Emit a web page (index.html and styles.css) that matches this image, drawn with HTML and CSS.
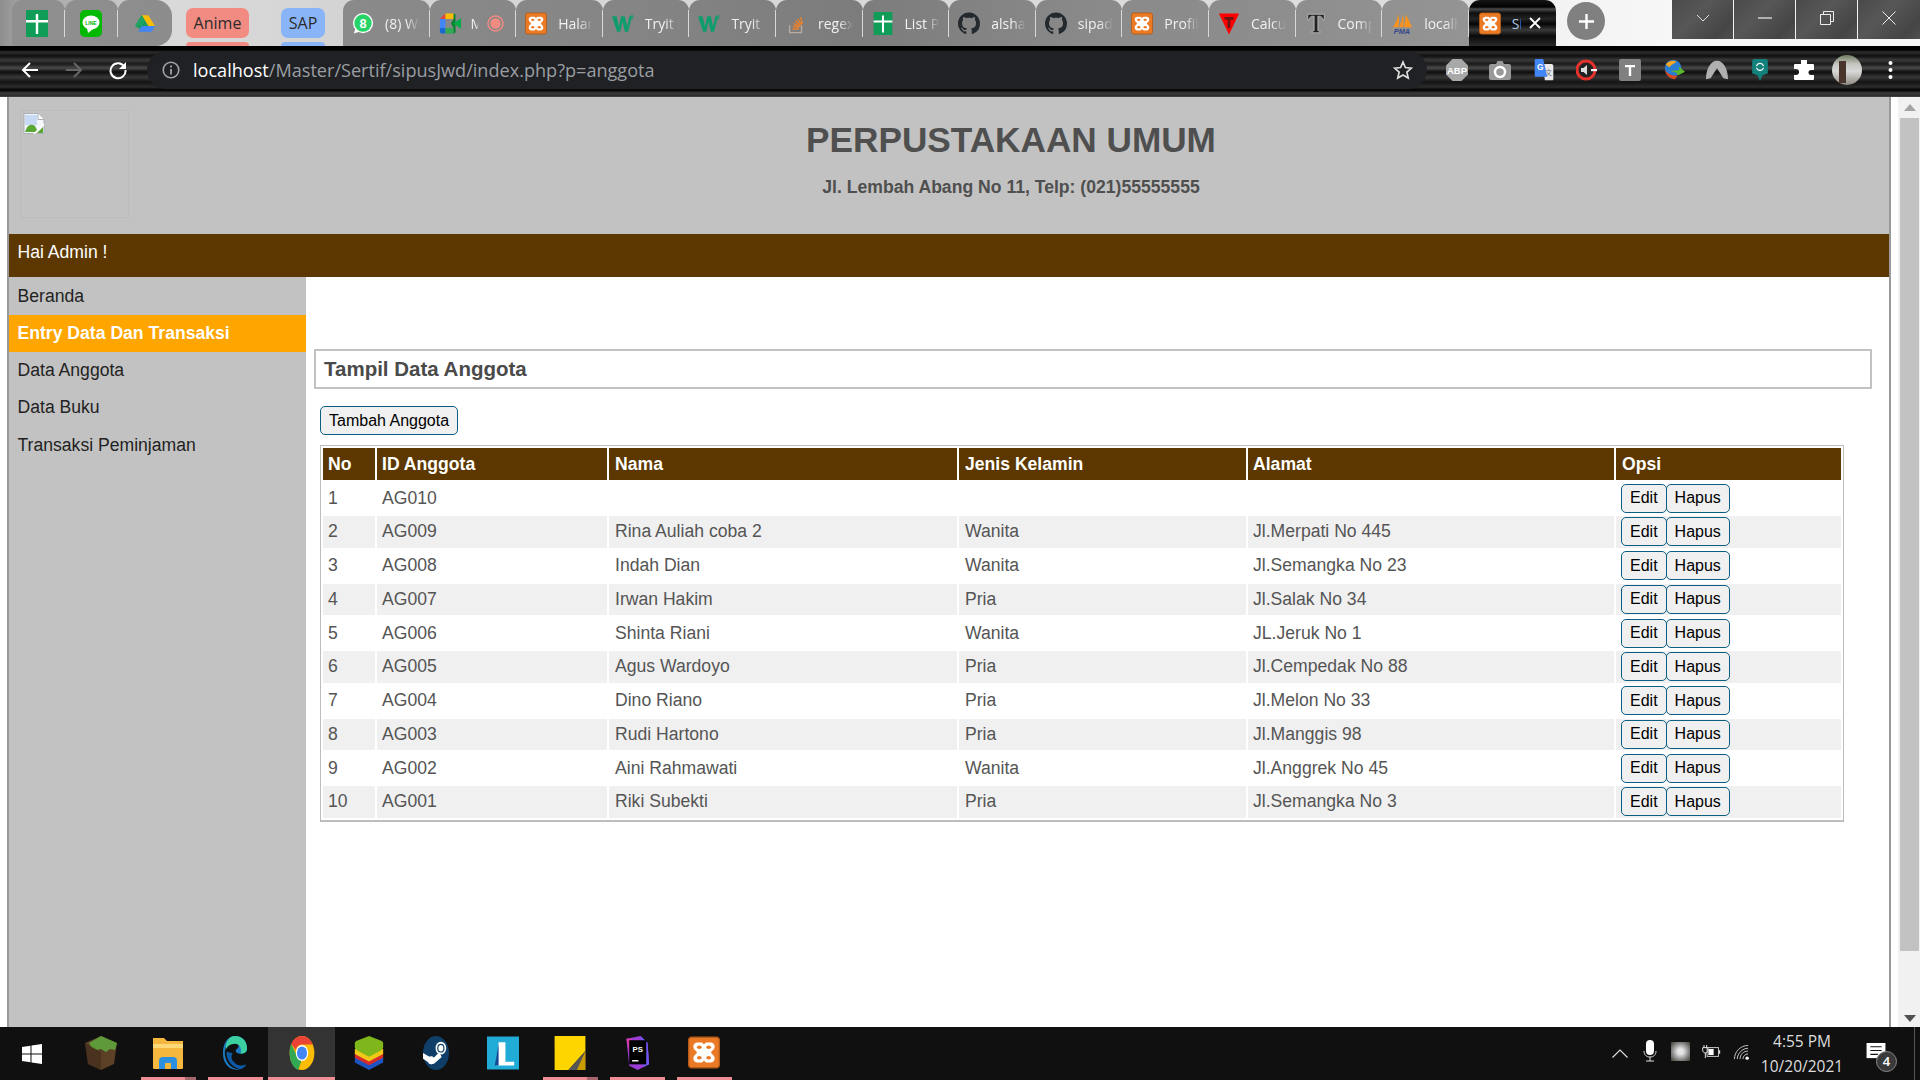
FILE: index.html
```html
<!DOCTYPE html>
<html lang="id">
<head>
<meta charset="utf-8">
<title>Perpustakaan Umum</title>
<link rel="stylesheet" href="styles.css">
</head>
<body>
<svg class="defs" aria-hidden="true">
  <symbol id="i-sheet" viewBox="0 0 22 27"><rect width="22" height="27" rx="1" fill="#0f9d58"/><path d="M0 10h22v2.4H0zM9.8 4h2.4v20H9.8z" fill="#fff"/></symbol>
  <symbol id="i-xampp" viewBox="0 0 24 24"><rect x=".5" y=".5" width="23" height="23" rx="2.5" fill="#ea7a25" stroke="#b65c18"/><path d="M7 4.5h3.2c1 0 1.3 1.4 1.8 1.4s.8-1.4 1.8-1.4H17c1.8 0 3 1.4 3 3.2 0 2.4-2.6 3-2.6 4.3s2.6 1.900 2.600 4.300c0 1.800-1.200 3.200-3 3.200h-3.200c-1 0-1.300-1.400-1.800-1.400s-.8 1.400-1.800 1.400H7c-1.800 0-3-1.400-3-3.200 0-2.400 2.600-3 2.600-4.300S4 10.100 4 7.700c0-1.800 1.200-3.200 3-3.200z" fill="#fff"/><ellipse cx="8.500" cy="8" rx="1.800" ry="1.300" fill="#ea7a25"/><ellipse cx="15.500" cy="8" rx="1.800" ry="1.300" fill="#ea7a25"/><ellipse cx="8.500" cy="16" rx="1.800" ry="1.300" fill="#ea7a25"/><ellipse cx="15.500" cy="16" rx="1.800" ry="1.300" fill="#ea7a25"/></symbol>
  <symbol id="i-w3" viewBox="0 0 24 22"><path d="M0 3h5l2.500 11L10 3h4l2.500 11L19 3h3l-4.500 17h-3.500L11.500 9 9 20H5.500z" fill="#0f9d6c"/><text x="20" y="6" class="w3-sup">3</text></symbol>
  <symbol id="i-gh" viewBox="0 0 16 16"><path fill="#24292e" d="M8 0C3.580 0 0 3.580 0 8c0 3.540 2.290 6.530 5.470 7.590.4.070.55-.17.55-.38 0-.19-.01-.82-.01-1.490-2.010.37-2.530-.49-2.690-.94-.09-.23-.48-.94-.82-1.130-.28-.15-.68-.52-.01-.53.63-.01 1.080.58 1.230.82.720 1.210 1.870.87 2.330.66.070-.52.280-.87.510-1.070-1.780-.2-3.640-.89-3.640-3.950 0-.87.310-1.590.820-2.150-.08-.2-.36-1.020.08-2.120 0 0 .67-.21 2.200.82.640-.18 1.320-.27 2-.27s1.360.09 2 .27c1.530-1.040 2.200-.82 2.200-.82.440 1.100.160 1.920.08 2.120.51.560.82 1.270.82 2.150 0 3.070-1.870 3.750-3.650 3.950.29.250.54.730.54 1.480 0 1.070-.01 1.930-.01 2.200 0 .21.150.46.550.38A8.010 8.010 0 0 0 16 8c0-4.420-3.580-8-8-8z"/></symbol>
</svg>

<header class="tabstrip">
  <div class="tab pin pin1"><svg class="ic-sheet"><use href="#i-sheet"/></svg></div>
  <div class="tab pin pin2">
    <svg class="ic22" viewBox="0 0 22 27"><rect width="22" height="27" rx="5" fill="#00b900"/><ellipse cx="11" cy="12.500" rx="8.500" ry="7" fill="#fff"/><path d="M7 18l1 5 5-4z" fill="#fff"/><text x="11" y="14.500" class="line-t">LINE</text></svg>
  </div>
  <div class="tab pin pin3">
    <svg class="ic-drive" viewBox="0 0 24 22"><path d="M8 1h8l8 13h-8z" fill="#fbbc04"/><path d="M8 1l8 13-4 7L0 14z" fill="#0f9d58" opacity=".95"/><path d="M4 21l4-7h16l-4 7z" fill="#4285f4"/><path d="M8 1l4 7-4 6-8 0z" fill="#1ea362"/></svg>
  </div>
  <div class="tab-group">
    <div class="chip chip-red"><span>Anime</span></div>
    <div class="chip chip-blue"><span>SAP</span></div>
  </div>
  <div class="tab">
    <svg class="ic" viewBox="0 0 24 24"><circle cx="12" cy="11.500" r="11" fill="#fff"/><circle cx="12" cy="11.500" r="9.500" fill="#25d366"/><path d="M2 23l2-6 4 4z" fill="#fff"/><text x="12" y="16.500" class="wa-n">8</text></svg>
    <span class="tab-t">(8) WhatsApp</span>
  </div>
  <div class="tab">
    <svg class="ic" viewBox="0 0 24 24"><path d="M1 7l6-6v6z" fill="#ea4335"/><rect x="1" y="7" width="6" height="10" fill="#4285f4"/><path d="M1 17h6v6H3a2 2 0 0 1-2-2z" fill="#1967d2"/><path d="M7 1h9v6H7z" fill="#fbbc04"/><path d="M7 17h9v6H7z" fill="#34a853"/><path d="M16 1v6l-3 5 3 5v6a2 2 0 0 0 2-2V3a2 2 0 0 0-2-2z" fill="#00832d"/><path d="M16 12l8-6v12z" fill="#00ac47"/></svg>
    <span class="tab-t tab-short">Meet</span>
    <svg class="rec" viewBox="0 0 18 18"><circle cx="9" cy="9" r="8" fill="none" stroke="#f28b82" stroke-width="1.500"/><circle cx="9" cy="9" r="5.500" fill="#f28b82"/></svg>
  </div>
  <div class="tab"><svg class="ic"><use href="#i-xampp"/></svg><span class="tab-t">Halaman Utama</span></div>
  <div class="tab"><svg class="ic"><use href="#i-w3"/></svg><span class="tab-t">Tryit Editor</span></div>
  <div class="tab"><svg class="ic"><use href="#i-w3"/></svg><span class="tab-t">Tryit Editor</span></div>
  <div class="tab">
    <svg class="ic" viewBox="0 0 24 24"><path d="M5 14v8h13v-8" fill="none" stroke="#bbaaa0" stroke-width="1.500"/><path d="M8 18h7M8.500 15l7 1M9.500 12l6.500 3M11.500 9l5.500 5M14 7l4 6M17 5l2 7" stroke="#e8812d" stroke-width="1.600"/></svg>
    <span class="tab-t">regex</span>
  </div>
  <div class="tab"><svg class="ic"><use href="#i-sheet"/></svg><span class="tab-t">List Pegawai</span></div>
  <div class="tab"><svg class="ic"><use href="#i-gh"/></svg><span class="tab-t">alshadiq</span></div>
  <div class="tab"><svg class="ic"><use href="#i-gh"/></svg><span class="tab-t">sipadu</span></div>
  <div class="tab"><svg class="ic"><use href="#i-xampp"/></svg><span class="tab-t">Profil</span></div>
  <div class="tab">
    <svg class="ic" viewBox="0 0 24 24"><path d="M1 1h22L12 24z" fill="#f00"/><path d="M7 5h10v3h-3.500v9h-3V8H7z" fill="#6b1212"/></svg>
    <span class="tab-t">Calculator</span>
  </div>
  <div class="tab">
    <svg class="ic" viewBox="0 0 24 24"><path d="M3 2h18v6h-1.500c-.3-2.500-1.500-4-4-4H14v15c0 1 .8 1.500 2.500 1.500V22h-9v-1.500C9.200 20.500 10 20 10 19V4H8.500c-2.500 0-3.700 1.500-4 4H3z" fill="#222" stroke="#eee" stroke-width=".6"/></svg>
    <span class="tab-t">Compress</span>
  </div>
  <div class="tab">
    <svg class="ic" viewBox="0 0 24 24"><path d="M2 16C5 12 7 7 8 2c1 5 1 10 0 14zM9 16c2-5 3-9 4-14 1 5 1 10 0 14zM14 16c1-5 2-9 2-14 3 5 5 10 7 14z" fill="#f7931e"/><text x="12" y="23" class="pma">PMA</text></svg>
    <span class="tab-t">localhost</span>
  </div>
  <div class="tab tab-active">
    <svg class="ic"><use href="#i-xampp"/></svg>
    <span class="tab-t tab-tiny">Sistem</span>
    <svg class="tab-x" viewBox="0 0 12 12"><path d="M1 1l10 10M11 1L1 11" stroke="#fff" stroke-width="1.800"/></svg>
  </div>
  <div class="newtab"><svg viewBox="0 0 18 18"><path d="M9 1v16M1 9h16" stroke="#fff" stroke-width="2.500"/></svg></div>
  <div class="winctl">
    <div class="wbtn"><svg viewBox="0 0 14 8"><path d="M1 1l6 6 6-6" fill="none" stroke="#ddd"/></svg></div>
    <div class="wbtn"><svg viewBox="0 0 14 2"><path d="M0 1h14" stroke="#eee" stroke-width="1.200"/></svg></div>
    <div class="wbtn"><svg viewBox="0 0 14 14"><path d="M.5 3.500h10v10H.5zM3.500 3.500v-3h10v10h-3" fill="none" stroke="#eee"/></svg></div>
    <div class="wbtn wbtn-last"><svg viewBox="0 0 14 14"><path d="M.5.5l13 13M13.500.5l-13 13" stroke="#eee"/></svg></div>
  </div>
</header>

<div class="toolbar">
  <div class="navslot"><svg viewBox="0 0 20 20"><path d="M18 10H3M10 3l-7 7 7 7" fill="none" stroke="#fff" stroke-width="2"/></svg></div>
  <div class="navslot"><svg viewBox="0 0 20 20"><path d="M2 10h15M10 3l7 7-7 7" fill="none" stroke="#666" stroke-width="2"/></svg></div>
  <div class="navslot"><svg viewBox="0 0 20 20"><path d="M16.500 7A7.500 7.500 0 1 0 17.500 10" fill="none" stroke="#fff" stroke-width="2"/><path d="M18 2v7h-7z" fill="#fff"/></svg></div>
  <div class="omnibox">
    <svg class="info" viewBox="0 0 18 18"><circle cx="9" cy="9" r="7.800" fill="none" stroke="#a0a4a8" stroke-width="1.600"/><path d="M8.100 8h1.800v5.500H8.100zM8.100 4.600h1.800v1.800H8.100z" fill="#a0a4a8"/></svg>
    <span class="url"><span class="url-host">localhost</span>/Master/Sertif/sipusJwd/index.php?p=anggota</span>
    <svg class="star" viewBox="0 0 20 20"><path d="M10 2l2.400 5.500 6 .6-4.500 4 1.300 5.900L10 15l-5.200 3 1.300-5.900-4.500-4 6-.6z" fill="none" stroke="#ddd" stroke-width="1.700"/></svg>
  </div>
  <div class="exts">
    <div class="ext"><svg viewBox="0 0 22 22"><path d="M6.500 0h9L22 6.500v9L15.500 22h-9L0 15.500v-9z" fill="#a8a8a8"/><text x="11" y="14.500" class="abp">ABP</text></svg></div>
    <div class="ext"><svg viewBox="0 0 22 22"><path d="M2 5h5l1.500-3h5L15 5h5a2 2 0 0 1 2 2v12a2 2 0 0 1-2 2H2a2 2 0 0 1-2-2V7a2 2 0 0 1 2-2z" fill="#999"/><circle cx="11" cy="13" r="5" fill="none" stroke="#fff" stroke-width="2.500"/></svg></div>
    <div class="ext"><svg viewBox="0 0 22 26"><path d="M10 6h10a2 2 0 0 1 2 2v16a1 1 0 0 1-1 1H12z" fill="#e8e8e8"/><text x="16.500" y="19" class="gt2">文</text><path d="M1.500 0H10l5 21H1.500A1.500 1.500 0 0 1 0 19.500v-18A1.500 1.500 0 0 1 1.500 0z" fill="#4285f4"/><text x="6.500" y="13" class="gt">G</text></svg></div>
    <div class="ext"><svg viewBox="0 0 22 22"><circle cx="10" cy="11" r="9" fill="#222" stroke="#e5322d" stroke-width="3"/><path d="M5 9h2.500L11 6v10l-3.500-3H5z" fill="#ddd"/><path d="M15 10h6v2.200h-6z" fill="#fff"/></svg></div>
    <div class="ext"><svg viewBox="0 0 22 22"><rect width="22" height="22" rx="2" fill="#808080"/><path d="M6 6h10v2.200h-3.800V17H9.800V8.200H6z" fill="#fff"/></svg></div>
    <div class="ext"><svg viewBox="0 0 24 24"><circle cx="11" cy="10" r="9" fill="#2b7cd3"/><path d="M3 6c3-4 8-5 12-3-3 2-6 3-8 6z" fill="#f5a623"/><path d="M2 12c3 4 8 7 14 6l-3 4C8 22 3 18 2 12z" fill="#d84a20"/><path d="M8 13l10-1-1-4 7 6-8 4-1-3z" fill="#59b82c"/></svg></div>
    <div class="ext"><svg viewBox="0 0 24 20"><path d="M0 20C0 9 5 0 12 0s12 9 12 20l-5-1-7-11-7 11z" fill="#b0b0b0"/></svg></div>
    <div class="ext"><svg viewBox="0 0 20 28"><path d="M3 0h14a3 3 0 0 1 3 3v15l-7 3-3 7-3-7-7-3V3a3 3 0 0 1 3-3z" fill="#14817d"/><circle cx="10" cy="10" r="4.500" fill="none" stroke="#fff" stroke-width="1.600"/><path d="M1 10h18" stroke="#14817d" stroke-width="2"/></svg></div>
    <div class="ext"><svg viewBox="0 0 22 22"><path d="M8 1h6v4h6a1 1 0 0 1 1 1v5h-3a2.500 2.500 0 0 0 0 5h3v4a1 1 0 0 1-1 1H2a1 1 0 0 1-1-1v-4h2a3 3 0 0 0 0-6H1V6a1 1 0 0 1 1-1h6z" fill="#fff"/></svg></div>
    <div class="ext"><span class="avatar"><span class="avatar-fig"></span></span></div>
    <div class="ext"><svg class="dots" viewBox="0 0 4 20"><circle cx="2" cy="3" r="2" fill="#fff"/><circle cx="2" cy="10" r="2" fill="#fff"/><circle cx="2" cy="17" r="2" fill="#fff"/></svg></div>
  </div>
</div>

<div class="viewport">
  <div class="doc">
    <div class="wrap">
      <div class="site-head">
        <div class="logo">
          <svg class="broken" viewBox="0 0 22 21"><path d="M1 .5h14l6 6v14H1z" fill="#f4f6fa" stroke="#a9b0b8"/><path d="M15 .5v6h6" fill="#fff" stroke="#a9b0b8"/><path d="M2 2h12v10H2z" fill="#c7d9f5"/><path d="M2 19c2-7 6-9 10-6l3 6z" fill="#5aa733"/><path d="M14 20l6-6v6z" fill="#5aa733"/><path d="M11 21l10-10" stroke="#fff" stroke-width="1.500"/></svg>
        </div>
        <div class="site-title">
          <h1>PERPUSTAKAAN UMUM</h1>
          <p>Jl. Lembah Abang No 11, Telp: (021)55555555</p>
        </div>
      </div>
      <div class="greet">Hai Admin !</div>
      <div class="columns">
        <nav class="side">
          <a class="side-item side-first">Beranda</a>
          <a class="side-item side-active">Entry Data Dan Transaksi</a>
          <a class="side-item">Data Anggota</a>
          <a class="side-item">Data Buku</a>
          <a class="side-item side-last">Transaksi Peminjaman</a>
        </nav>
        <main class="content">
          <h3 class="panel-title">Tampil Data Anggota</h3>
          <button class="btn btn-add">Tambah Anggota</button>
          <table class="grid">
            <colgroup><col class="c-no"><col class="c-id"><col class="c-nama"><col class="c-jk"><col class="c-al"><col class="c-op"></colgroup>
            <thead><tr><th>No</th><th>ID Anggota</th><th>Nama</th><th>Jenis Kelamin</th><th>Alamat</th><th>Opsi</th></tr></thead>
            <tbody>
              <tr><td>1</td><td>AG010</td><td></td><td></td><td></td><td><button class="btn">Edit</button><button class="btn">Hapus</button></td></tr>
              <tr><td>2</td><td>AG009</td><td>Rina Auliah coba 2</td><td>Wanita</td><td>Jl.Merpati No 445</td><td><button class="btn">Edit</button><button class="btn">Hapus</button></td></tr>
              <tr><td>3</td><td>AG008</td><td>Indah Dian</td><td>Wanita</td><td>Jl.Semangka No 23</td><td><button class="btn">Edit</button><button class="btn">Hapus</button></td></tr>
              <tr><td>4</td><td>AG007</td><td>Irwan Hakim</td><td>Pria</td><td>Jl.Salak No 34</td><td><button class="btn">Edit</button><button class="btn">Hapus</button></td></tr>
              <tr><td>5</td><td>AG006</td><td>Shinta Riani</td><td>Wanita</td><td>JL.Jeruk No 1</td><td><button class="btn">Edit</button><button class="btn">Hapus</button></td></tr>
              <tr><td>6</td><td>AG005</td><td>Agus Wardoyo</td><td>Pria</td><td>Jl.Cempedak No 88</td><td><button class="btn">Edit</button><button class="btn">Hapus</button></td></tr>
              <tr><td>7</td><td>AG004</td><td>Dino Riano</td><td>Pria</td><td>Jl.Melon No 33</td><td><button class="btn">Edit</button><button class="btn">Hapus</button></td></tr>
              <tr><td>8</td><td>AG003</td><td>Rudi Hartono</td><td>Pria</td><td>Jl.Manggis 98</td><td><button class="btn">Edit</button><button class="btn">Hapus</button></td></tr>
              <tr><td>9</td><td>AG002</td><td>Aini Rahmawati</td><td>Wanita</td><td>Jl.Anggrek No 45</td><td><button class="btn">Edit</button><button class="btn">Hapus</button></td></tr>
              <tr><td>10</td><td>AG001</td><td>Riki Subekti</td><td>Pria</td><td>Jl.Semangka No 3</td><td><button class="btn">Edit</button><button class="btn">Hapus</button></td></tr>
            </tbody>
          </table>
        </main>
      </div>
    </div>
  </div>
  <div class="scrollbar">
    <div class="sb-arrow"><svg viewBox="0 0 12 7"><path d="M6 0l6 7H0z" fill="#a3a3a3"/></svg></div>
    <div class="sb-thumb"></div>
    <div class="sb-arrow sb-down"><svg viewBox="0 0 12 7"><path d="M0 0h12L6 7z" fill="#505050"/></svg></div>
  </div>
</div>

<footer class="taskbar">
  <div class="start"><svg viewBox="0 0 20 20"><path d="M0 3l8.500-1.300v7.800H0zM9.500 1.600L20 0v9.500H9.500zM0 10.500h8.500v7.800L0 17zM9.500 10.500H20V20L9.500 18.400z" fill="#fff"/></svg></div>
  <div class="tb-app">
    <svg viewBox="0 0 32 34"><path d="M16 0l16 7-3 21-13 6-13-6L0 7z" fill="#5b4026"/><path d="M16 0l16 7-2 7-5-1-4 3-5-3-4 1-5-2-3-5z" fill="#5f9a3a"/><path d="M16 16v18l-13-6L0 7z" fill="#3d2a19" opacity=".6"/></svg>
  </div>
  <div class="tb-app tb-open tb-stack">
    <svg viewBox="0 0 30 34"><path d="M0 2h11l3 3h16v27a1 1 0 0 1-1 1H1a1 1 0 0 1-1-1z" fill="#f5b73d"/><path d="M0 8h30v4H0z" fill="#fdd877"/><path d="M6 33v-8a4 4 0 0 1 4-4h10a4 4 0 0 1 4 4v8h-6v-6h-6v6z" fill="#2d8fe0"/></svg>
  </div>
  <div class="tb-app tb-open">
    <svg viewBox="0 0 34 48"><path d="M17 0c11 0 17 8 17 18 0 4-3 7-9 7-4 0-7-2-7-4 0-3 4-3 4-7C22 9 16 5 9 9 3 13 2 22 3 28 5 40 14 48 24 47 15 50 0 44 0 24 0 10 7 0 17 0z" fill="#1b7cc4"/><path d="M17 0c11 0 17 8 17 18 0 4-3 7-9 7 2-8-2-14-8-14S5 15 4 20C3 8 9 0 17 0z" fill="#3ccf9f"/><path d="M5 22c-1 12 8 22 19 25 4 0 7-3 9-7-8 4-15 1-19-5-3-4-2-9 0-11-4 0-7-1-9-2z" fill="#0c5aa6"/></svg>
  </div>
  <div class="tb-app tb-open tb-active">
    <svg viewBox="0 0 32 44"><ellipse cx="16" cy="22" rx="16" ry="22" fill="#fbbc05"/><path d="M16 0c6 0 11 4 14 11H16c-4 0-7 3-8 7L2 10C5 4 10 0 16 0z" fill="#ea4335"/><path d="M2 10l7 15c1 3 4 5 7 5l-5 14C4 41 0 32 0 22c0-4 1-9 2-12z" fill="#34a853"/><ellipse cx="16" cy="22" rx="8" ry="10.500" fill="#fff"/><ellipse cx="16" cy="22" rx="6.500" ry="8.500" fill="#4285f4"/></svg>
  </div>
  <div class="tb-app">
    <svg viewBox="0 0 30 36"><path d="M15 16l15 6v6L15 36 0 28v-6z" fill="#1d54c2"/><path d="M15 12l15 6v5l-15 8L0 23v-5z" fill="#d62b2b"/><path d="M15 8l15 6v5l-15 8L0 19v-5z" fill="#f2c917"/><path d="M15 0l13 5c2 1 2 2 2 3v4c0 1-1 2-2 3l-13 7-13-7c-1-1-2-2-2-3V8c0-1 0-2 2-3z" fill="#7eb61c"/></svg>
  </div>
  <div class="tb-app">
    <svg viewBox="0 0 32 42"><ellipse cx="16" cy="21" rx="16" ry="21" fill="#0f3f68"/><ellipse cx="22" cy="15" rx="6.500" ry="8" fill="#fff"/><ellipse cx="22" cy="15" rx="4.500" ry="5.500" fill="#0f3f68"/><ellipse cx="22" cy="15" rx="3" ry="4" fill="#fff"/><path d="M0 21l12 7 8-8 3 6-9 8-4 1-10-7z" fill="#fff"/><ellipse cx="10" cy="30" rx="4" ry="5" fill="#fff"/></svg>
  </div>
  <div class="tb-app">
    <svg class="tb-l" viewBox="0 0 33 34"><rect width="33" height="34" fill="#21acd8"/><path d="M12 6h7v20h9v4H10z" fill="#fff"/><path d="M8 30l4-22v22z" fill="#174a93"/></svg>
  </div>
  <div class="tb-app tb-open tb-stack">
    <svg class="tb-s" viewBox="0 0 29 32"><path d="M0 0h29v14L13 32H0z" fill="#ffd500"/><path d="M29 14v18H13z" fill="#555"/><path d="M29 14l-8 18h8z" fill="#c89c00"/></svg>
  </div>
  <div class="tb-app tb-open">
    <svg viewBox="0 0 34 48"><path d="M2 4l20-4 10 10 2 30-16 8-12-6z" fill="#9b3cd6"/><path d="M22 0l10 10 2 30-8 4z" fill="#6d58f0"/><path d="M2 4l8 0-4 20z" fill="#d93aa6"/><rect x="6" y="6" width="24" height="34" fill="#000"/><text x="18" y="22" class="ps">PS</text><path d="M10 34h9v2h-9z" fill="#fff"/></svg>
  </div>
  <div class="tb-app tb-open">
    <svg class="tb-x"><use href="#i-xampp"/></svg>
  </div>
  <div class="tray">
    <div class="tray-i t-chev"><svg viewBox="0 0 16 9"><path d="M.5 8.500L8 1l7.500 7.500" fill="none" stroke="#ddd" stroke-width="1.200"/></svg></div>
    <div class="tray-i t-mic"><svg viewBox="0 0 14 22"><rect x="3" width="8" height="15" rx="4" fill="#fff"/><path d="M1 11c0 4 2.500 6 6 6s6-2 6-6M7 17v4M3 21h8" fill="none" stroke="#ddd"/></svg></div>
    <div class="tray-i t-sq"><span class="sq"></span></div>
    <div class="tray-i t-bat"><svg viewBox="0 0 22 16"><path d="M3 0v3M6 0v3M1.500 3h6v3c0 2-1.500 3-3 3s-3-1-3-3zM4.500 9v6" fill="none" stroke="#fff"/><rect x="6.500" y="3" width="13" height="10" fill="none" stroke="#ddd"/><rect x="8" y="4.500" width="6" height="7" fill="#fff"/><path d="M20 6h1.500v4H20" fill="#ddd"/></svg></div>
    <div class="tray-i t-wifi"><svg viewBox="0 0 16 16"><path d="M.5 15C.5 7 7 .5 15 .5M3.500 15C3.500 9 9 3.500 15 3.500M6.500 15c0-5 3.500-8.500 8.500-8.500M9.500 15c0-3 2.500-5.500 5.500-5.500" fill="none" stroke="#ccc"/><circle cx="14" cy="14" r="1.800" fill="#fff"/></svg></div>
    <div class="clock"><span>4:55 PM</span><span>10/20/2021</span></div>
    <div class="notif">
      <svg viewBox="0 0 20 18"><path d="M0 0h20v16H0z" fill="#fff"/><path d="M4 4h12M4 8h12M4 12h8" stroke="#111" stroke-width="1.200"/></svg>
      <span class="badge">4</span>
    </div>
    <div class="desk-edge"></div>
  </div>
</footer>
</body>
</html>
```

FILE: styles.css
```css
* { box-sizing: border-box; }
html, body { margin: 0; height: 1080px; overflow: hidden; }
body {
  display: flex;
  flex-direction: column;
  width: 1920px;
  font-family: "Liberation Sans", Arial, sans-serif;
  font-size: 17.6px;
  color: #555;
  background: #fff;
}
.defs { position: absolute; width: 0; height: 0; }
svg { display: block; flex: none; }

/* tab strip */
.tabstrip {
  display: flex;
  height: 46px;
  flex: none;
  padding-left: 12px;
  font-family: "Open Sans", "Noto Sans", sans-serif;
  font-size: 14px;
  color: #f1f1f1;
  background: linear-gradient(90deg, #8e8e8e 0, #9b9b9b 12px, #d9d9d9 170px, #d4d4d4 340px, #dedede 1468px, #f3f3f3 1556px, #f7f7f7 1672px);
}
.tab {
  position: relative;
  display: flex;
  align-items: center;
  flex: none;
  width: 86.6px;
  padding-left: 9px;
  border-radius: 11px 11px 0 0;
  background: linear-gradient(90deg, #8f8f8f 0, #8a8a8a 340px, #858585 620px, #7c7c7c 860px, #8a8a8a 1100px, #8e8e8e 1300px, #949494 1468px) fixed;
}
.tab::after {
  content: "";
  position: absolute;
  right: 0;
  top: 10px;
  bottom: 9px;
  width: 1px;
  background: #d8d8d8;
}
.tab-active::after { display: none; }
.pin { width: 53px; padding-left: 14px; }
.pin1 { width: 53px; }
.pin2 { width: 53px; padding-left: 15px; }
.pin3 { width: 54px; padding-left: 17px; border-radius: 11px 16px 16px 0; }
.pin3::after { display: none; }
.ic-sheet, .ic22 { width: 22px; height: 27px; }
.ic-drive { width: 20px; height: 19px; }
.line-t { font: 700 5px "Liberation Sans", sans-serif; fill: #00b900; text-anchor: middle; }
.w3-sup { font: 700 6px "Liberation Sans", sans-serif; fill: #0f9d6c; }
.wa-n { font: 700 14px "Liberation Sans", sans-serif; fill: #fff; text-anchor: middle; }
.pma { font: italic 700 8px "Liberation Sans", sans-serif; fill: #33468a; text-anchor: middle; }
.abp { font: 700 9.500px "Liberation Sans", sans-serif; fill: #fff; text-anchor: middle; }
.gt { font: 700 10px "Liberation Sans", sans-serif; fill: #fff; text-anchor: middle; }
.gt2 { font: 8px "Noto Sans CJK SC", sans-serif; fill: #777; text-anchor: middle; }
.ps { font: 700 11px "Liberation Sans", sans-serif; fill: #fff; text-anchor: middle; }
.ic { width: 22px; height: 23px; }
.tab-t {
  flex: none;
  width: 35px;
  margin-left: 11px;
  overflow: hidden;
  white-space: nowrap;
  -webkit-mask-image: linear-gradient(90deg, #000 60%, transparent 100%);
  mask-image: linear-gradient(90deg, #000 60%, transparent 100%);
}
.tab-short { width: 8px; margin-left: 10px; }
.rec { width: 17px; height: 17px; margin-left: 8px; }
.tab-group {
  display: flex;
  flex: none;
  gap: 32px;
  width: 171px;
  padding-left: 14px;
  color: #2b2b2b;
}
.chip {
  position: relative;
  display: flex;
  align-items: center;
  justify-content: center;
  height: 30px;
  margin-top: 8px;
  border-radius: 7px;
  font-size: 16px;
}
.chip::after {
  content: "";
  position: absolute;
  left: 0;
  right: 0;
  top: 34px;
  height: 4px;
  border-radius: 5px 5px 0 0;
  background: inherit;
}
.chip-red { width: 63px; background: #f28b82; }
.chip-blue { width: 44px; background: #8ab4f8; }
.tab-active {
  width: 87.5px;
  padding-left: 10px;
  background: linear-gradient(180deg, #151515 0, #000 7px, #4c4c4c 9px, #0e0e0e 13px, #242424 19px, #050505 24px, #3a3a3a 30px, #0a0a0a 36px, #2a2a2a 46px);
}
.tab-tiny { width: 9px; margin-left: 11px; -webkit-mask-image: none; mask-image: none; color: #aec6e8; }
.tab-x { width: 12px; height: 12px; margin-left: 8px; }
.newtab {
  display: flex;
  align-items: center;
  justify-content: center;
  flex: none;
  width: 38px;
  height: 38px;
  margin: 2px 0 0 11px;
  border-radius: 50%;
  background: #808080;
}
.newtab svg { width: 17px; height: 17px; }
.winctl { display: flex; height: 39px; margin-left: 67px; flex: none; }
.wbtn {
  display: flex;
  align-items: center;
  justify-content: center;
  width: 62px;
  padding-bottom: 4px;
  border-right: 1.500px solid #f2f2f2;
  background: linear-gradient(135deg, #4a4a4a, #575757 40%, #454545 80%, #505050);
}
.wbtn svg { width: 14px; height: 14px; }
.wbtn-last { border-right: 0; }

/* toolbar */
.toolbar {
  display: flex;
  flex: none;
  height: 51px;
  padding: 5px 0 0 7.500px;
  background: linear-gradient(180deg, #000 0, #000 4px, #2e2e2e 6px, #101010 10px, #3a3a3a 14px, #1a1a1a 18px, #4a4a4a 22px, #0d0d0d 26px, #383838 31px, #141414 36px, #2c2c2c 41px, #000 44px, #3a3a3a 47px, #2b2b2b 50px, #555 51px);
}
.navslot { display: flex; align-items: center; justify-content: center; width: 44px; height: 38px; flex: none; }
.navslot svg { width: 20px; height: 20px; }
.omnibox {
  display: flex;
  align-items: center;
  flex: none;
  width: 1280.500px;
  height: 38px;
  margin-left: 7px;
  padding: 0 15px;
  border-radius: 19px;
  background: #202124;
}
.info { width: 18px; height: 18px; }
.url {
  margin-left: 13.500px;
  font-family: "Open Sans", "Noto Sans", sans-serif;
  font-size: 18.100px;
  color: #9a9ea3;
  white-space: nowrap;
}
.url-host { color: #fff; }
.star { width: 20px; height: 20px; margin-left: auto; margin-right: -1px; }
.exts { display: flex; flex: none; margin-left: 8.500px; }
.ext { display: flex; align-items: center; justify-content: center; width: 43.300px; height: 38px; flex: none; }
.ext svg { width: 22px; height: 22px; }
.ext .dots { width: 5px; height: 20px; }
.avatar {
  display: flex;
  justify-content: center;
  overflow: hidden;
  width: 30px;
  height: 30px;
  border-radius: 50%;
  background: linear-gradient(180deg, #6f7a5e 0, #c5c5c0 30%, #d8d8d8 55%, #8f8a80 100%);
}
.avatar-fig { width: 7px; height: 22px; margin: 6px 8px 0 0; background: #4a352c; }

/* viewport */
.viewport { display: flex; flex: 1; min-height: 0; }
.doc { flex: 1; min-width: 0; padding: 0 7px; background: #fff; }
.wrap {
  display: flex;
  flex-direction: column;
  height: 100%;
  border-left: 2px solid #999;
  border-right: 2px solid #999;
}
.site-head { display: flex; flex: none; height: 137px; padding: 13px 0 0 11px; background: #c2c2c2; }
.logo { flex: none; width: 109px; height: 108px; padding: 2px; border: 1px solid #bcbcbc; }
.broken { width: 22px; height: 21px; }
.site-title { flex: 1; padding: 10px 8px 0 12px; text-align: center; color: #4f4f4f; }
.site-title h1 { margin: 0; font-size: 35.200px; line-height: 40px; font-weight: 700; }
.site-title p { margin: 17px 0 0; font-size: 17.600px; line-height: 20px; font-weight: 700; }
.greet { flex: none; height: 43px; padding: 0 8.500px; line-height: 36px; color: #fff; background: #5c3800; }
.columns { display: flex; flex: 1; min-height: 0; }
.side { display: flex; flex-direction: column; flex: none; width: 297px; background: #c2c2c2; }
.side-item { display: block; height: 37px; padding: 0 8.500px; line-height: 37px; color: #222; }
.side-first { height: 38px; line-height: 38px; }
.side-last { margin-top: 1px; }
.side-active { font-weight: 700; color: #fff; background: #ffa500; }
.content { flex: 1; min-width: 0; padding: 72px 17px 0 8px; background: #fff; }
.panel-title {
  height: 40px;
  margin: 0;
  padding: 0 8px;
  border: 2px solid #c2c2c2;
  font-size: 20.500px;
  line-height: 36px;
  color: #4a4a4a;
}
.btn {
  height: 29px;
  padding: 0 8px;
  border: 1px solid #0b5f82;
  border-radius: 5px;
  background: #f0f0f0;
  font: 16px "Liberation Sans", Arial, sans-serif;
  color: #000;
  vertical-align: top;
}
.btn + .btn { margin-left: -1px; }
.btn-add { display: block; margin: 17px 0 0 6px; }
.grid {
  table-layout: fixed;
  width: 1524px;
  margin: 10px 0 0 6px;
  border: 1px solid #bdbdbd;
  border-bottom-width: 2px;
  border-spacing: 2px;
}
.c-no { width: 52px; }
.c-id { width: 230px; }
.c-nama { width: 348px; }
.c-jk { width: 287px; }
.c-al { width: 366px; }
.c-op { width: 225px; }
.grid th {
  height: 32.300px;
  padding: 0 5px;
  text-align: left;
  color: #fff;
  background: #5c3800;
  font-weight: 700;
}
.grid td { height: 31.750px; padding: 0 5px; color: #555; }
.grid th:nth-child(3), .grid td:nth-child(3),
.grid th:nth-child(4), .grid td:nth-child(4),
.grid th:nth-child(6) { padding-left: 6px; }
.grid tbody tr:nth-child(even) td { background: #f0f0f0; }

/* scrollbar */
.scrollbar { display: flex; flex-direction: column; flex: none; width: 22px; background: #f1f1f1; }
.sb-arrow { display: flex; align-items: center; justify-content: center; flex: none; height: 21px; padding-left: 1px; }
.sb-arrow svg { width: 12px; height: 7px; }
.sb-thumb { flex: none; width: 19px; height: 833px; margin-left: 2px; background: #c2c2c2; }
.sb-down { margin-top: auto; height: 18px; }

/* taskbar */
.taskbar { display: flex; flex: none; height: 53px; background: #101010; }
.start { display: flex; align-items: center; justify-content: center; flex: none; width: 67px; padding-right: 3px; }
.start svg { width: 20px; height: 20px; }
.tb-app {
  position: relative;
  display: flex;
  align-items: center;
  justify-content: center;
  flex: none;
  width: 67px;
  padding-bottom: 2px;
}
.tb-app svg { width: 32px; height: 34px; }
.tb-app .tb-x { width: 32px; height: 33px; }
.tb-open::after {
  content: "";
  position: absolute;
  left: 7px;
  right: 5px;
  bottom: 0;
  height: 3px;
  background: #f08c94;
}
.tb-stack::before {
  content: "";
  position: absolute;
  right: 5px;
  bottom: 0;
  width: 11px;
  height: 3px;
  background: #a5666c;
  z-index: 1;
}
.tb-active { background: #333; }
.tb-active::after { left: 0; right: 0; }
.tray { display: flex; align-items: center; margin-left: auto; color: #ddd; font-family: "Open Sans", "Noto Sans", sans-serif; }
.tray-i { display: flex; align-items: center; justify-content: center; flex: none; width: 30.500px; height: 100%; }
.t-chev svg { width: 16px; height: 9px; margin-bottom: 1px; }
.t-mic svg { width: 14px; height: 22px; margin-bottom: 5px; }
.sq { display: block; width: 19px; height: 19px; margin-bottom: 5px; background: radial-gradient(circle, #e6e6e6 20%, #8c8c8c 60%, #3c3a2a 100%); }
.t-bat svg { width: 20px; height: 14px; margin-bottom: 4px; }
.t-wifi svg { width: 15px; height: 15px; margin-bottom: 2px; }
.clock { display: flex; flex-direction: column; align-items: center; gap: 4px; flex: none; width: 90px; font-size: 15.500px; line-height: 21px; }
.notif { position: relative; flex: none; width: 30px; height: 100%; margin-left: 19px; padding-top: 16px; }
.notif svg { width: 20px; height: 17px; }
.badge {
  position: absolute;
  left: 10px;
  top: 24px;
  width: 21px;
  height: 21px;
  border: 1px solid #888;
  border-radius: 50%;
  background: #3a3a3a;
  color: #fff;
  font-size: 13px;
  font-weight: 600;
  line-height: 19px;
  text-align: center;
}
.desk-edge { flex: none; width: 1px; height: 100%; margin: 0 5px 0 18px; background: #555; }
```
